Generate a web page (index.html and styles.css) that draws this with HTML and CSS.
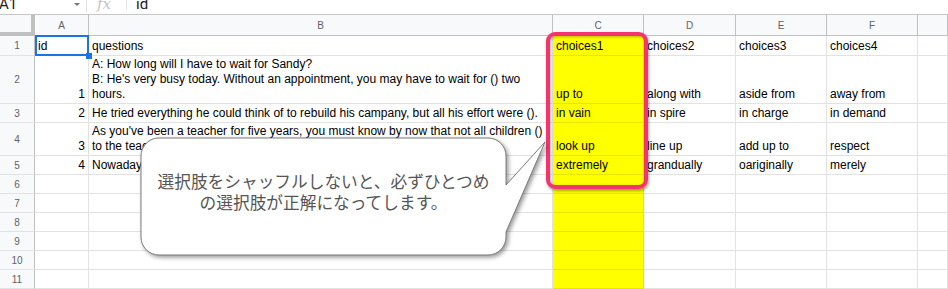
FILE: index.html
```html
<!DOCTYPE html>
<html>

<head>
    <title>Sheet</title>
    <link rel="stylesheet" href="styles.css">
</head>

<body>
    <div class="page">
        <div class="formula-bar">
            <div class="name-box">
                <span class="name">A1</span>
                <span class="caret"></span>
            </div>
            <div class="fx">fx</div>
            <div class="formula">id</div>
        </div>

        <div class="sheet">
            <div class="cell corner"></div>
            <div class="cell col-head">A</div>
            <div class="cell col-head">B</div>
            <div class="cell col-head">C</div>
            <div class="cell col-head">D</div>
            <div class="cell col-head">E</div>
            <div class="cell col-head">F</div>
            <div class="cell col-head"></div>

            <div class="cell row-head">1</div>
            <div class="cell selected">id</div>
            <div class="cell">questions</div>
            <div class="cell yellow">choices1</div>
            <div class="cell">choices2</div>
            <div class="cell">choices3</div>
            <div class="cell">choices4</div>
            <div class="cell"></div>

            <div class="cell row-head">2</div>
            <div class="cell num">1</div>
            <div class="cell">A: How long will I have to wait for Sandy?<br>B: He's very busy today. Without an appointment, you may have to wait for () two<br>hours.</div>
            <div class="cell yellow">up to</div>
            <div class="cell">along with</div>
            <div class="cell">aside from</div>
            <div class="cell">away from</div>
            <div class="cell"></div>

            <div class="cell row-head">3</div>
            <div class="cell num">2</div>
            <div class="cell">He tried everything he could think of to rebuild his campany, but all his effort were ().</div>
            <div class="cell yellow">in vain</div>
            <div class="cell">in spire</div>
            <div class="cell">in charge</div>
            <div class="cell">in demand</div>
            <div class="cell"></div>

            <div class="cell row-head">4</div>
            <div class="cell num">3</div>
            <div class="cell">As you've been a teacher for five years, you must know by now that not all children ()<br>to the teacher's advice.</div>
            <div class="cell yellow">look up</div>
            <div class="cell">line up</div>
            <div class="cell">add up to</div>
            <div class="cell">respect</div>
            <div class="cell"></div>

            <div class="cell row-head">5</div>
            <div class="cell num">4</div>
            <div class="cell">Nowadays, vegetables are () expensive.</div>
            <div class="cell yellow">extremely</div>
            <div class="cell">grandually</div>
            <div class="cell">oariginally</div>
            <div class="cell">merely</div>
            <div class="cell"></div>

            <div class="cell row-head">6</div>
            <div class="cell"></div><div class="cell"></div><div class="cell yellow"></div>
            <div class="cell"></div><div class="cell"></div><div class="cell"></div><div class="cell"></div>

            <div class="cell row-head">7</div>
            <div class="cell"></div><div class="cell"></div><div class="cell yellow"></div>
            <div class="cell"></div><div class="cell"></div><div class="cell"></div><div class="cell"></div>

            <div class="cell row-head">8</div>
            <div class="cell"></div><div class="cell"></div><div class="cell yellow"></div>
            <div class="cell"></div><div class="cell"></div><div class="cell"></div><div class="cell"></div>

            <div class="cell row-head">9</div>
            <div class="cell"></div><div class="cell"></div><div class="cell yellow"></div>
            <div class="cell"></div><div class="cell"></div><div class="cell"></div><div class="cell"></div>

            <div class="cell row-head">10</div>
            <div class="cell"></div><div class="cell"></div><div class="cell yellow"></div>
            <div class="cell"></div><div class="cell"></div><div class="cell"></div><div class="cell"></div>

            <div class="cell row-head">11</div>
            <div class="cell"></div><div class="cell"></div><div class="cell yellow"></div>
            <div class="cell"></div><div class="cell"></div><div class="cell"></div><div class="cell"></div>
        </div>

        <!-- annotation: frame round column C -->
        <div class="highlight"></div>

        <!-- annotation: speech bubble -->
        <svg class="bubble" width="430" height="140" viewBox="0 0 430 140">
            <path d="M29,10 H358 A18,18 0 0 1 376,28 V57 L415,14 L376,104 V109 A18,18 0 0 1 358,127 H29 A18,18 0 0 1 11,109 V28 A18,18 0 0 1 29,10 Z"
                fill="#ffffff" stroke="#7a7a7a" stroke-width="1" />
        </svg>
        <div class="bubble-text">
            選択肢をシャッフルしないと、必ずひとつめ<br>の選択肢が正解になってします。
        </div>
    </div>
</body>

</html>
```

FILE: styles.css
```css
body {
    margin: 0;
    background-color: #ffffff;
    overflow: hidden;
}

.page {
    position: relative;
    width: 948px;
    height: 289px;
    overflow: hidden;
    font-family: "Liberation Sans", Arial, sans-serif;
}

.formula-bar {
    display: flex;
    height: 15px;
    box-sizing: border-box;
    border-bottom: 1px solid #c7c7c7;
    overflow: hidden;
    font-family: Roboto, "Liberation Sans", sans-serif;
    font-size: 15px;
}

.name-box {
    width: 87px;
    height: 12px;
    box-sizing: border-box;
    display: flex;
    justify-content: space-between;
    align-items: flex-start;
    padding-right: 6px;
    border-right: 1px solid #e0e0e0;
}

.name {
    line-height: 14px;
    margin-top: -3px;
    margin-left: -1px;
    color: #202124;
}

.caret {
    width: 0;
    height: 0;
    margin-top: 3px;
    border-left: 3px solid transparent;
    border-right: 3px solid transparent;
    border-top: 3px solid #777777;
}

.fx {
    width: 40px;
    height: 12px;
    box-sizing: border-box;
    padding-left: 10px;
    border-right: 1px solid #e0e0e0;
    font-family: "DejaVu Serif", serif;
    font-style: italic;
    font-size: 15px;
    line-height: 14px;
    margin-top: -3px;
    color: #c4c4c4;
}

.formula {
    padding-left: 9px;
    line-height: 14px;
    margin-top: -3px;
    color: #202124;
}

.sheet {
    display: grid;
    grid-template-columns: 35px 54px 464px 91px 92px 91px 91px 1fr;
    grid-template-rows: 21px 20px 48px 19px 33px repeat(7, 19px);
}

.cell {
    box-sizing: border-box;
    border-right: 1px solid #e2e2e2;
    border-bottom: 1px solid #e2e2e2;
    padding: 0 3px 1px 3px;
    display: flex;
    flex-direction: column;
    justify-content: flex-end;
    font-size: 12px;
    line-height: 15px;
    white-space: nowrap;
    overflow: hidden;
    color: #000000;
}

.cell.num {
    align-items: flex-end;
}

.cell.corner {
    background-color: #f8f9fa;
    border-right: 4px solid #c0c0c0;
    border-bottom: 4px solid #c0c0c0;
}

.cell.col-head {
    background-color: #f8f9fa;
    border-right-color: #c0c0c0;
    border-bottom-color: #c0c0c0;
    justify-content: center;
    align-items: center;
    padding: 0;
    font-size: 10px;
    color: #5f6368;
}

.cell.row-head {
    background-color: #f8f9fa;
    border-right-color: #c0c0c0;
    justify-content: center;
    align-items: center;
    padding: 0;
    font-size: 10px;
    color: #5f6368;
}

.cell.yellow {
    background-color: #ffff00;
    border-right-color: #e6e600;
    border-bottom-color: #e6e600;
}

.cell.selected {
    position: relative;
    overflow: visible;
}

.cell.selected::after {
    content: "";
    position: absolute;
    left: 0;
    top: -1px;
    right: -1px;
    bottom: -1px;
    border: 2px solid #1a73e8;
}

.cell.selected::before {
    content: "";
    position: absolute;
    right: -4px;
    bottom: -4px;
    width: 6px;
    height: 6px;
    background-color: #1a73e8;
    z-index: 1;
}

.highlight {
    position: absolute;
    left: 546px;
    top: 32px;
    width: 102px;
    height: 157px;
    box-sizing: border-box;
    border: 4px solid #f3346f;
    border-radius: 9px;
    box-shadow: 1px 2px 3px rgba(0, 0, 0, 0.35), inset 1px 1px 3px rgba(0, 0, 0, 0.3);
}

.bubble {
    position: absolute;
    left: 130px;
    top: 128px;
    filter: drop-shadow(2px 2px 2px rgba(0, 0, 0, 0.4));
}

.bubble-text {
    position: absolute;
    left: 141px;
    top: 138px;
    width: 365px;
    height: 108px;
    display: flex;
    align-items: center;
    justify-content: center;
    text-align: center;
    font-family: "Noto Sans CJK JP", sans-serif;
    font-size: 16.7px;
    line-height: 21px;
    color: #555555;
}
```
